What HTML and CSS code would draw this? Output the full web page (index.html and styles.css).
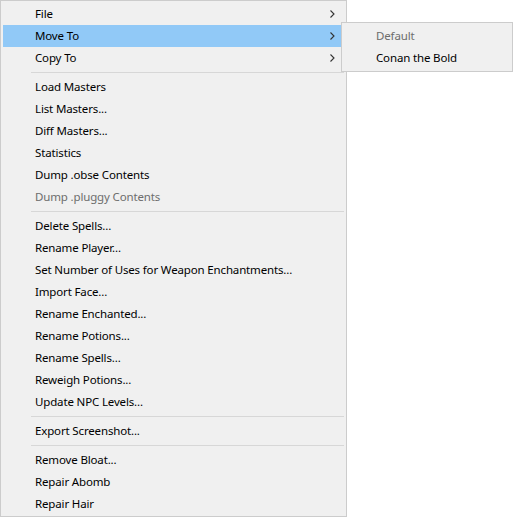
FILE: index.html
```html
<!DOCTYPE html>
<html>
<head>
<meta charset="utf-8">
<link rel="stylesheet" href="styles.css">
</head>
<body>
<div class="stage">
  <div class="menu">
    <div class="item has-sub"><span class="label">File</span><span class="chev"><svg width="5" height="8" viewBox="0 0 5 8"><path d="M0.5 0.5 L4 4 L0.5 7.5" fill="none" stroke="#333" stroke-width="1.1"/></svg></span></div>
    <div class="item has-sub active"><span class="label">Move To</span><span class="chev"><svg width="5" height="8" viewBox="0 0 5 8"><path d="M0.5 0.5 L4 4 L0.5 7.5" fill="none" stroke="#333" stroke-width="1.1"/></svg></span></div>
    <div class="item has-sub"><span class="label">Copy To</span><span class="chev"><svg width="5" height="8" viewBox="0 0 5 8"><path d="M0.5 0.5 L4 4 L0.5 7.5" fill="none" stroke="#333" stroke-width="1.1"/></svg></span></div>
    <div class="sep"></div>
    <div class="item"><span class="label">Load Masters</span></div>
    <div class="item"><span class="label">List Masters...</span></div>
    <div class="item"><span class="label">Diff Masters...</span></div>
    <div class="item"><span class="label">Statistics</span></div>
    <div class="item"><span class="label">Dump .obse Contents</span></div>
    <div class="item disabled"><span class="label">Dump .pluggy Contents</span></div>
    <div class="sep"></div>
    <div class="item"><span class="label">Delete Spells...</span></div>
    <div class="item"><span class="label">Rename Player...</span></div>
    <div class="item"><span class="label">Set Number of Uses for Weapon Enchantments...</span></div>
    <div class="item"><span class="label">Import Face...</span></div>
    <div class="item"><span class="label">Rename Enchanted...</span></div>
    <div class="item"><span class="label">Rename Potions...</span></div>
    <div class="item"><span class="label">Rename Spells...</span></div>
    <div class="item"><span class="label">Reweigh Potions...</span></div>
    <div class="item"><span class="label">Update NPC Levels...</span></div>
    <div class="sep"></div>
    <div class="item"><span class="label">Export Screenshot...</span></div>
    <div class="sep"></div>
    <div class="item"><span class="label">Remove Bloat...</span></div>
    <div class="item"><span class="label">Repair Abomb</span></div>
    <div class="item"><span class="label">Repair Hair</span></div>
  </div>
  <div class="menu submenu">
    <div class="item disabled"><span class="label">Default</span></div>
    <div class="item"><span class="label">Conan the Bold</span></div>
  </div>
</div>
</body>
</html>
```
FILE: styles.css
```css
html, body {
  margin: 0;
  padding: 0;
  background: #ffffff;
}
body {
  font-family: "Noto Sans", "Open Sans", sans-serif;
  font-size: 11.5px;
  letter-spacing: -0.15px;
  color: #000000;
}
.stage {
  position: relative;
  width: 513px;
  height: 518px;
}
.menu {
  box-sizing: border-box;
  width: 347px;
  background: #f0f0f0;
  border: 1px solid #cccccc;
  padding: 2px 5px 1px 2px;
  display: flex;
  flex-direction: column;
}
.item {
  height: 22px;
  display: flex;
  align-items: center;
  padding-left: 32px;
  padding-right: 6px;
}
.label {
  flex: 1;
  white-space: nowrap;
  line-height: 22px;
}
.item.active {
  background: #91c9f7;
}
.item.disabled {
  color: #6d6d6d;
}
.chev {
  display: flex;
  align-items: center;
  width: 5px;
  height: 8px;
}
.sep {
  height: 7px;
  display: flex;
  align-items: center;
  padding-left: 28px;
  margin-right: -3px;
}
.sep::before {
  content: "";
  flex: 1;
  height: 1px;
  background: #d7d7d7;
}
.submenu {
  position: absolute;
  left: 341px;
  top: 22px;
  width: 172px;
  padding: 2px;
}
```
